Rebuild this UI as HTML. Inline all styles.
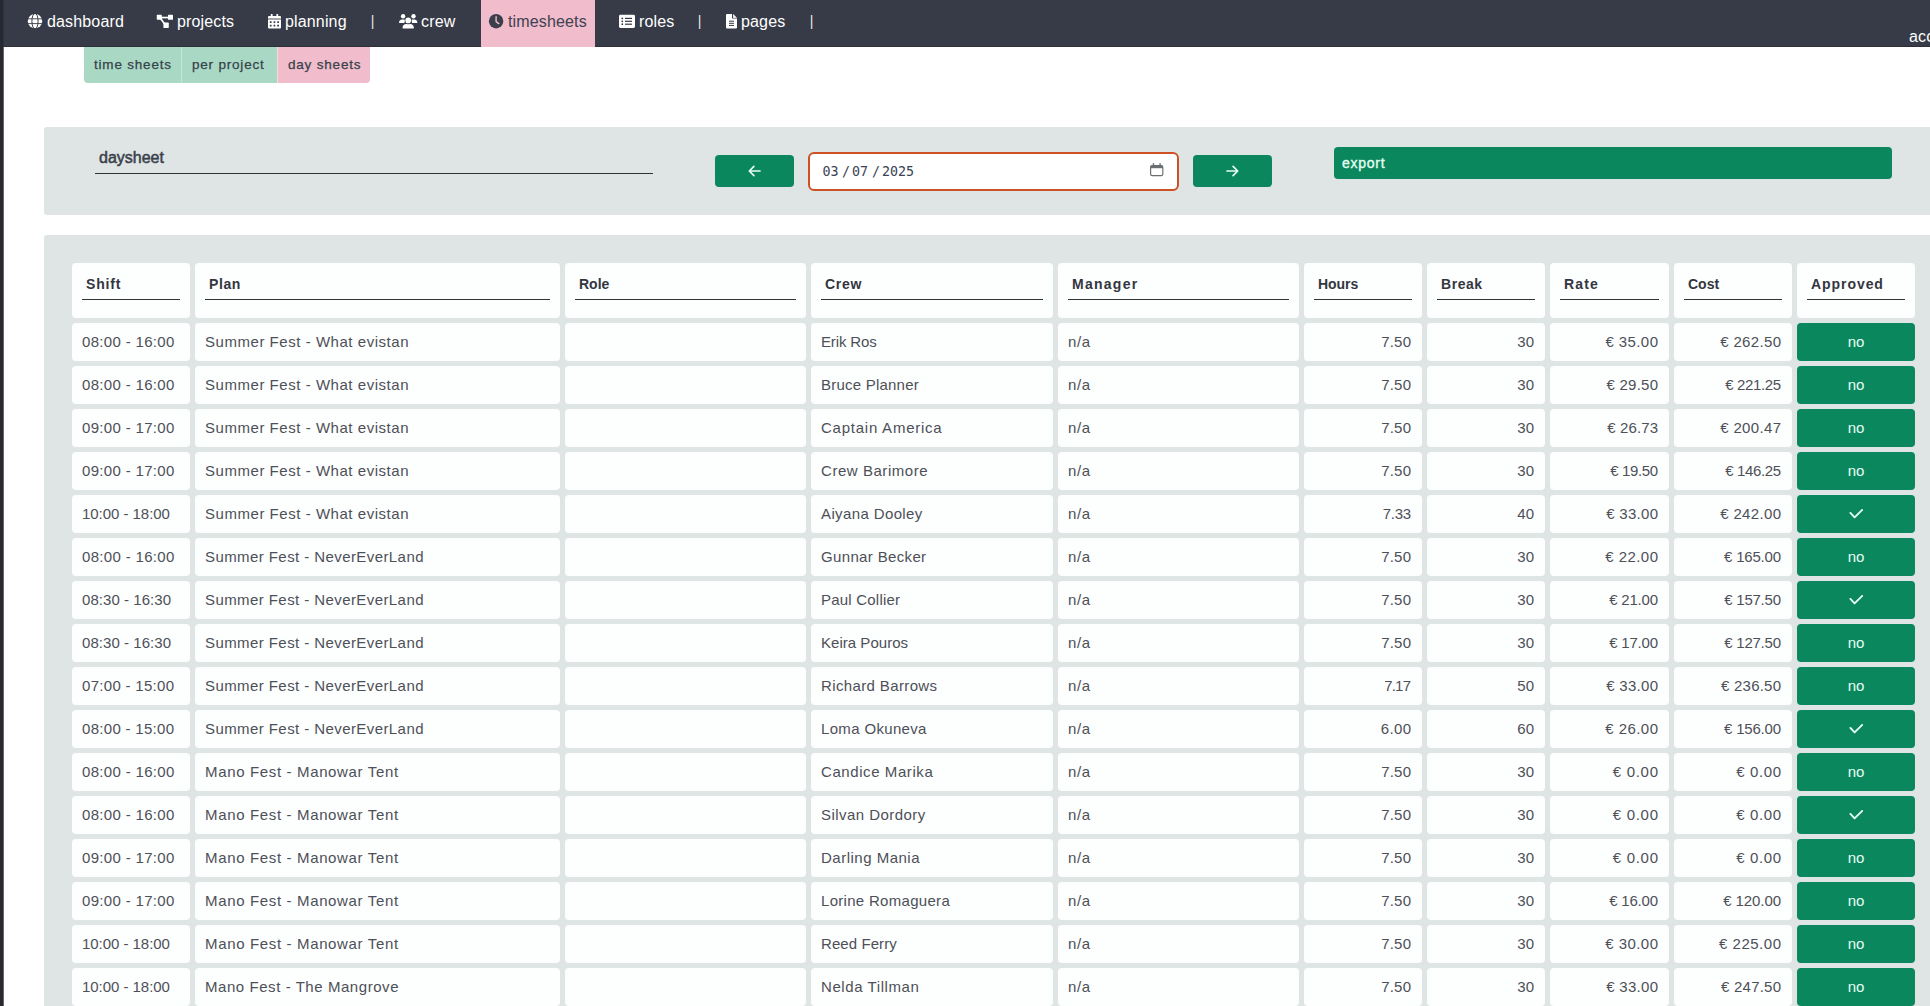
<!DOCTYPE html>
<html lang="en">
<head>
<meta charset="utf-8">
<title>day sheets</title>
<style>
*{box-sizing:border-box;margin:0;padding:0}
html,body{width:1930px;height:1006px;overflow:hidden;background:#fff}
body{font-family:"Liberation Sans",sans-serif;color:#474a50;position:relative}
.strip{position:absolute;left:0;top:0;width:4px;height:1006px;background:#2a292d;border-right:1px solid #69686b;z-index:5}
.strip i{position:absolute;left:0;top:0;width:4px;height:47px;background:#262932;border-right:1px solid #30333d}
.nav{position:absolute;left:0;top:0;width:1930px;height:47px;background:#363b47;border-bottom:1px solid #2d3038}
.nav .it{position:absolute;top:0;height:46px;color:#fff;font-size:16px;line-height:16px;white-space:nowrap;letter-spacing:.15px}
.nav .it span{position:absolute;top:14px;left:0}
.nav .it svg{position:absolute}
.nav .sep{position:absolute;top:12px;color:#e4e5e7;font-size:14px;line-height:18px;width:4px;text-align:center}
.nav .act{position:absolute;left:481px;top:0;width:114px;height:47px;background:#f1bccb}
.tabs{position:absolute;left:84px;top:47px;height:36px;display:flex;font-size:13.5px;letter-spacing:.8px;color:#37424a;-webkit-text-stroke:.25px #37424a}
.tabs div{height:36px;background:#a9d9c5;position:relative}
.tabs div span{position:absolute;top:10px;white-space:nowrap;line-height:16px}
.panel{position:absolute;left:44px;background:#dfe5e5;border-radius:3px 0 0 3px;width:1900px}
.p1{top:127px;height:88px}
.p2{top:235px;height:800px}
.ttl{position:absolute;left:51px;top:20px;width:558px;height:27px;border-bottom:1px solid #2f3338;font-size:16px;-webkit-text-stroke:.5px #3a3f4a;color:#3a3f4a}
.ttl span{position:absolute;left:4px;top:3px;line-height:16px}
.btn{position:absolute;background:#0b875d;border-radius:4px;color:#fff}
.date{position:absolute;left:764px;top:25px;width:371px;height:39px;background:#fff;border:2px solid #cc5226;border-radius:6px;font-family:"DejaVu Sans Mono","Liberation Mono",monospace;font-size:13.33px;color:#3a4254}
.date span{position:absolute;top:10px;line-height:16px;white-space:pre}
table{position:absolute;left:23px;top:23px;border-collapse:separate;border-spacing:5px;table-layout:fixed;width:1853px;font-size:15px}
th,td{background:#fdfefe;border-radius:4px;overflow:hidden;white-space:nowrap}
th{height:55px;text-align:left;vertical-align:top;padding:10px;font-size:14px;color:#33363f}
th div{height:27px;border-bottom:1.5px solid #2f3338;padding:2px 0 0 4px;line-height:18px}
td{height:38px;padding:0 10px;color:#4d5058;line-height:38px}
td.r{text-align:right;padding-right:11px}
td.r span{display:inline-block}
td.ap{background:#0b875d;color:#e6fff4;text-align:center;padding:0}
.chk{width:14px;height:11px;vertical-align:middle;position:relative;top:-1.5px;left:-.5px}
</style>
</head>
<body>
<div class="nav">
  <div class="act"></div>

  <svg style="position:absolute;left:27px;top:13px" width="16" height="16" viewBox="-8 -8 16 16"><circle cx="0" cy="0.2" r="7.2" fill="#fff"/><g stroke="#363b47" fill="none"><path d="M-7.5 -2.2H7.5M-7.5 2.6H7.5" stroke-width="0.9"/><ellipse cx="0" cy="0.2" rx="3.1" ry="7.8" stroke-width="1"/></g></svg>
  <svg style="position:absolute;left:156px;top:14px" width="18" height="15" viewBox="156 14 18 15"><g fill="#fff"><rect x="156.8" y="14.8" width="5" height="5" rx=".6"/><rect x="168" y="14.8" width="5" height="5" rx=".6"/><rect x="163.4" y="22.4" width="5.4" height="5.5" rx=".6"/><rect x="161" y="16.7" width="8" height="1.7"/></g><path d="M160.6 18.6 L164.6 24" stroke="#fff" stroke-width="1.7"/></svg>
  <svg style="position:absolute;left:267px;top:13px" width="15" height="16" viewBox="267 13 15 16"><g fill="#fff"><path d="M269 15.9 H280 A1 1 0 0 1 281 16.9 V18.4 H268 V16.9 A1 1 0 0 1 269 15.9 Z"/><rect x="268" y="18.4" width="13" height="1.3" fill="#aeb0b6"/><path d="M268 19.7 H281 V27.6 A1 1 0 0 1 280 28.6 H269 A1 1 0 0 1 268 27.6 Z"/><rect x="270.8" y="14" width="1.8" height="3" rx=".5"/><rect x="276.4" y="14" width="1.8" height="3" rx=".5"/></g><g fill="#363b47"><rect x="269.8" y="21.2" width="1.8" height="1.7" rx=".3"/><rect x="273.5" y="21.2" width="1.8" height="1.7" rx=".3"/><rect x="277.2" y="21.2" width="1.8" height="1.7" rx=".3"/><rect x="269.8" y="24.7" width="1.8" height="1.7" rx=".3"/><rect x="273.5" y="24.7" width="1.8" height="1.7" rx=".3"/><rect x="277.2" y="24.7" width="1.8" height="1.7" rx=".3"/></g></svg>
  <svg style="position:absolute;left:398px;top:13px" width="20" height="16" viewBox="398 13 20 16"><g fill="#fff"><circle cx="403.1" cy="16.2" r="2.2"/><circle cx="413.5" cy="16.2" r="2.2"/><path d="M399 23 C399 20.6 400.6 19.6 402 19.6 H404 C404.8 19.6 405.4 19.9 405.9 20.3 C404.9 21 404.5 22 404.4 23 Z"/><path d="M417.4 23 C417.4 20.6 415.8 19.6 414.4 19.6 H412.4 C411.6 19.6 411 19.9 410.5 20.3 C411.5 21 411.9 22 412 23 Z"/><circle cx="408.2" cy="20.4" r="3.5" fill="#363b47"/><circle cx="408.2" cy="20.4" r="2.85"/><path d="M402.6 28.6 V27.4 C402.6 25.2 404.4 23.9 406 23.9 H406.4 C407.6 24.5 408.8 24.5 410 23.9 H410.4 C412 23.9 413.8 25.2 413.8 27.4 V28.6 Z"/></g></svg>
  <svg style="position:absolute;left:488px;top:13px" width="16" height="16" viewBox="488 13 16 16"><circle cx="496.1" cy="21.2" r="7.2" fill="#3b3f4c"/><path d="M496.1 16.8 V21.6 L498.8 23.6" fill="none" stroke="#f1bccb" stroke-width="1.4" stroke-linecap="round" stroke-linejoin="round"/></svg>
  <svg style="position:absolute;left:618px;top:14px" width="18" height="15" viewBox="618 14 18 15"><rect x="619" y="14.8" width="16" height="13.1" rx="1.4" fill="#fff"/><g fill="#363b47"><circle cx="622.3" cy="18.4" r=".9"/><circle cx="622.3" cy="21.3" r=".9"/><circle cx="622.3" cy="24.2" r=".9"/><rect x="625" y="17.8" width="7" height="1.2"/><rect x="625" y="20.7" width="7" height="1.2"/><rect x="625" y="23.6" width="7" height="1.2"/></g></svg>
  <svg style="position:absolute;left:725px;top:13px" width="13" height="16" viewBox="725 13 13 16"><path d="M727 14 H732 V18.6 H737 V27.4 A1 1 0 0 1 736 28.4 H727 A1 1 0 0 1 726 27.4 V15 A1 1 0 0 1 727 14 Z" fill="#fff"/><path d="M733 14 L737 18 V17.8 H733 Z" fill="#fff"/><path d="M733 14.2 V17.8 H736.8 Z" fill="#e8e9ec"/><g fill="#363b47"><rect x="729" y="20.7" width="5" height="1"/><rect x="729" y="22.8" width="5" height="1"/><rect x="729" y="24.9" width="5" height="1"/></g></svg>
  <div class="it" style="left:47px"><span>dashboard</span></div>
  <div class="it" style="left:177px"><span>projects</span></div>
  <div class="it" style="left:285px"><span>planning</span></div>
  <div class="sep" style="left:370.5px">|</div>
  <div class="it" style="left:421px"><span>crew</span></div>
  <div class="it" style="left:508px;color:#3d4150"><span>timesheets</span></div>
  <div class="it" style="left:639px"><span>roles</span></div>
  <div class="sep" style="left:697.5px">|</div>
  <div class="it" style="left:741px"><span>pages</span></div>
  <div class="sep" style="left:809.5px">|</div>
  <div class="it" style="left:1909px"><span style="top:29px">account</span></div>
</div>
<div class="tabs">
  <div style="width:97px;border-radius:0 0 0 4px"><span style="left:10px">time sheets</span></div>
  <div style="width:96px;border-left:1px solid #c4e6d8"><span style="left:10px">per project</span></div>
  <div style="width:93px;background:#f1bccb;border-left:1px solid #f4d9e0;border-radius:0 0 4px 0"><span style="left:10px">day sheets</span></div>
</div>
<div class="panel p1">
  <div class="ttl"><span>daysheet</span></div>
  <div class="btn" style="left:671px;top:28px;width:79px;height:32px"><svg style="position:absolute;left:32px;top:9px" width="15" height="14" viewBox="0 0 15 14"><path d="M13 7 H2.6 M6.9 2.4 L2.3 7 L6.9 11.6" fill="none" stroke="#e6fff4" stroke-width="1.7" stroke-linecap="round" stroke-linejoin="round"/></svg></div>
  <div class="date"><span style="left:12.5px">03</span><span style="left:32px">/</span><span style="left:42px">07</span><span style="left:62px">/</span><span style="left:72px">2025</span>
    <svg style="position:absolute;left:340px;top:9px" width="14" height="14" viewBox="0 0 14 14"><rect x="0.6" y="2.6" width="12.2" height="10" rx="1.6" fill="none" stroke="#6c6f71" stroke-width="1.2"/><rect x="0.6" y="2.6" width="12.2" height="2.6" fill="#6c6f71"/><rect x="2.8" y="0.2" width="1.4" height="3" fill="#6c6f71"/><rect x="9.4" y="0.2" width="1.4" height="3" fill="#6c6f71"/></svg></div>
  <div class="btn" style="left:1149px;top:28px;width:79px;height:32px"><svg style="position:absolute;left:32px;top:9px" width="15" height="14" viewBox="0 0 15 14"><path d="M2 7 H12.4 M8.1 2.4 L12.7 7 L8.1 11.6" fill="none" stroke="#e6fff4" stroke-width="1.7" stroke-linecap="round" stroke-linejoin="round"/></svg></div>
  <div class="btn" style="left:1290px;top:20px;width:558px;height:32px;font-size:14px;letter-spacing:.75px;color:#e3fff2;-webkit-text-stroke:.35px #e3fff2"><span style="position:absolute;left:8px;top:8px;line-height:16px">export</span></div>
</div>
<div class="panel p2">
<table>
<colgroup><col style="width:118px"><col style="width:365px"><col style="width:241px"><col style="width:242px"><col style="width:241px"><col style="width:118px"><col style="width:118px"><col style="width:119px"><col style="width:118px"><col style="width:118px"></colgroup>
<thead><tr><th><div style="letter-spacing:.85px">Shift</div></th><th><div style="letter-spacing:.6px">Plan</div></th><th><div style="letter-spacing:-0px">Role</div></th><th><div style="letter-spacing:.73px">Crew</div></th><th><div style="letter-spacing:1.27px">Manager</div></th><th><div style="letter-spacing:-.05px">Hours</div></th><th><div style="letter-spacing:.55px">Break</div></th><th><div style="letter-spacing:1.13px">Rate</div></th><th><div style="letter-spacing:-0px">Cost</div></th><th><div style="letter-spacing:.94px">Approved</div></th></tr></thead>
<tbody>
<tr><td style="letter-spacing:.33px">08:00 - 16:00</td><td style="letter-spacing:.54px">Summer Fest - What evistan</td><td></td><td style="letter-spacing:-.13px">Erik Ros</td><td style="letter-spacing:.6px">n/a</td><td class="r"><span style="letter-spacing:.18px;margin-right:-.18px">7.50</span></td><td class="r"><span style="letter-spacing:.05px;margin-right:-.05px">30</span></td><td class="r"><span style="letter-spacing:.42px;margin-right:-.42px">€ 35.00</span></td><td class="r"><span style="letter-spacing:.34px;margin-right:-.34px">€ 262.50</span></td><td class="ap">no</td></tr>
<tr><td style="letter-spacing:.33px">08:00 - 16:00</td><td style="letter-spacing:.54px">Summer Fest - What evistan</td><td></td><td style="letter-spacing:.22px">Bruce Planner</td><td style="letter-spacing:.6px">n/a</td><td class="r"><span style="letter-spacing:.18px;margin-right:-.18px">7.50</span></td><td class="r"><span style="letter-spacing:.05px;margin-right:-.05px">30</span></td><td class="r"><span style="letter-spacing:.25px;margin-right:-.25px">€ 29.50</span></td><td class="r"><span style="letter-spacing:-.38px;margin-right:.38px">€ 221.25</span></td><td class="ap">no</td></tr>
<tr><td style="letter-spacing:.33px">09:00 - 17:00</td><td style="letter-spacing:.54px">Summer Fest - What evistan</td><td></td><td style="letter-spacing:.76px">Captain America</td><td style="letter-spacing:.6px">n/a</td><td class="r"><span style="letter-spacing:.18px;margin-right:-.18px">7.50</span></td><td class="r"><span style="letter-spacing:.05px;margin-right:-.05px">30</span></td><td class="r"><span style="letter-spacing:.12px;margin-right:-.12px">€ 26.73</span></td><td class="r"><span style="letter-spacing:.34px;margin-right:-.34px">€ 200.47</span></td><td class="ap">no</td></tr>
<tr><td style="letter-spacing:.33px">09:00 - 17:00</td><td style="letter-spacing:.54px">Summer Fest - What evistan</td><td></td><td style="letter-spacing:.55px">Crew Barimore</td><td style="letter-spacing:.6px">n/a</td><td class="r"><span style="letter-spacing:.18px;margin-right:-.18px">7.50</span></td><td class="r"><span style="letter-spacing:.05px;margin-right:-.05px">30</span></td><td class="r"><span style="letter-spacing:-.38px;margin-right:.38px">€ 19.50</span></td><td class="r"><span style="letter-spacing:-.38px;margin-right:.38px">€ 146.25</span></td><td class="ap">no</td></tr>
<tr><td style="letter-spacing:-.04px">10:00 - 18:00</td><td style="letter-spacing:.54px">Summer Fest - What evistan</td><td></td><td style="letter-spacing:.38px">Aiyana Dooley</td><td style="letter-spacing:.6px">n/a</td><td class="r"><span style="letter-spacing:-.35px;margin-right:.35px">7.33</span></td><td class="r"><span style="letter-spacing:.05px;margin-right:-.05px">40</span></td><td class="r"><span style="letter-spacing:.28px;margin-right:-.28px">€ 33.00</span></td><td class="r"><span style="letter-spacing:.34px;margin-right:-.34px">€ 242.00</span></td><td class="ap"><svg class="chk" viewBox="0 0 14 11"><path d="M1.4 4.9 L5.6 9.4 L13.2 1.9" fill="none" stroke="#e6fff4" stroke-width="1.9" stroke-linecap="round" stroke-linejoin="round"/></svg></td></tr>
<tr><td style="letter-spacing:.33px">08:00 - 16:00</td><td style="letter-spacing:.42px">Summer Fest - NeverEverLand</td><td></td><td style="letter-spacing:.35px">Gunnar Becker</td><td style="letter-spacing:.6px">n/a</td><td class="r"><span style="letter-spacing:.18px;margin-right:-.18px">7.50</span></td><td class="r"><span style="letter-spacing:.05px;margin-right:-.05px">30</span></td><td class="r"><span style="letter-spacing:.45px;margin-right:-.45px">€ 22.00</span></td><td class="r"><span style="letter-spacing:-.21px;margin-right:.21px">€ 165.00</span></td><td class="ap">no</td></tr>
<tr><td style="letter-spacing:.05px">08:30 - 16:30</td><td style="letter-spacing:.42px">Summer Fest - NeverEverLand</td><td></td><td style="letter-spacing:.21px">Paul Collier</td><td style="letter-spacing:.6px">n/a</td><td class="r"><span style="letter-spacing:.18px;margin-right:-.18px">7.50</span></td><td class="r"><span style="letter-spacing:.05px;margin-right:-.05px">30</span></td><td class="r"><span style="letter-spacing:-.22px;margin-right:.22px">€ 21.00</span></td><td class="r"><span style="letter-spacing:-.23px;margin-right:.23px">€ 157.50</span></td><td class="ap"><svg class="chk" viewBox="0 0 14 11"><path d="M1.4 4.9 L5.6 9.4 L13.2 1.9" fill="none" stroke="#e6fff4" stroke-width="1.9" stroke-linecap="round" stroke-linejoin="round"/></svg></td></tr>
<tr><td style="letter-spacing:.05px">08:30 - 16:30</td><td style="letter-spacing:.42px">Summer Fest - NeverEverLand</td><td></td><td style="letter-spacing:.03px">Keira Pouros</td><td style="letter-spacing:.6px">n/a</td><td class="r"><span style="letter-spacing:.18px;margin-right:-.18px">7.50</span></td><td class="r"><span style="letter-spacing:.05px;margin-right:-.05px">30</span></td><td class="r"><span style="letter-spacing:-.22px;margin-right:.22px">€ 17.00</span></td><td class="r"><span style="letter-spacing:-.23px;margin-right:.23px">€ 127.50</span></td><td class="ap">no</td></tr>
<tr><td style="letter-spacing:.3px">07:00 - 15:00</td><td style="letter-spacing:.42px">Summer Fest - NeverEverLand</td><td></td><td style="letter-spacing:.37px">Richard Barrows</td><td style="letter-spacing:.6px">n/a</td><td class="r"><span style="letter-spacing:-.8px;margin-right:.8px">7.17</span></td><td class="r"><span style="letter-spacing:.05px;margin-right:-.05px">50</span></td><td class="r"><span style="letter-spacing:.28px;margin-right:-.28px">€ 33.00</span></td><td class="r"><span style="letter-spacing:.22px;margin-right:-.22px">€ 236.50</span></td><td class="ap">no</td></tr>
<tr><td style="letter-spacing:.3px">08:00 - 15:00</td><td style="letter-spacing:.42px">Summer Fest - NeverEverLand</td><td></td><td style="letter-spacing:.34px">Loma Okuneva</td><td style="letter-spacing:.6px">n/a</td><td class="r"><span style="letter-spacing:.38px;margin-right:-.38px">6.00</span></td><td class="r"><span style="letter-spacing:.05px;margin-right:-.05px">60</span></td><td class="r"><span style="letter-spacing:.45px;margin-right:-.45px">€ 26.00</span></td><td class="r"><span style="letter-spacing:-.21px;margin-right:.21px">€ 156.00</span></td><td class="ap"><svg class="chk" viewBox="0 0 14 11"><path d="M1.4 4.9 L5.6 9.4 L13.2 1.9" fill="none" stroke="#e6fff4" stroke-width="1.9" stroke-linecap="round" stroke-linejoin="round"/></svg></td></tr>
<tr><td style="letter-spacing:.33px">08:00 - 16:00</td><td style="letter-spacing:.65px">Mano Fest - Manowar Tent</td><td></td><td style="letter-spacing:.58px">Candice Marika</td><td style="letter-spacing:.6px">n/a</td><td class="r"><span style="letter-spacing:.18px;margin-right:-.18px">7.50</span></td><td class="r"><span style="letter-spacing:.05px;margin-right:-.05px">30</span></td><td class="r"><span style="letter-spacing:.69px;margin-right:-.69px">€ 0.00</span></td><td class="r"><span style="letter-spacing:.61px;margin-right:-.61px">€ 0.00</span></td><td class="ap">no</td></tr>
<tr><td style="letter-spacing:.33px">08:00 - 16:00</td><td style="letter-spacing:.65px">Mano Fest - Manowar Tent</td><td></td><td style="letter-spacing:.45px">Silvan Dordory</td><td style="letter-spacing:.6px">n/a</td><td class="r"><span style="letter-spacing:.18px;margin-right:-.18px">7.50</span></td><td class="r"><span style="letter-spacing:.05px;margin-right:-.05px">30</span></td><td class="r"><span style="letter-spacing:.69px;margin-right:-.69px">€ 0.00</span></td><td class="r"><span style="letter-spacing:.61px;margin-right:-.61px">€ 0.00</span></td><td class="ap"><svg class="chk" viewBox="0 0 14 11"><path d="M1.4 4.9 L5.6 9.4 L13.2 1.9" fill="none" stroke="#e6fff4" stroke-width="1.9" stroke-linecap="round" stroke-linejoin="round"/></svg></td></tr>
<tr><td style="letter-spacing:.33px">09:00 - 17:00</td><td style="letter-spacing:.65px">Mano Fest - Manowar Tent</td><td></td><td style="letter-spacing:.5px">Darling Mania</td><td style="letter-spacing:.6px">n/a</td><td class="r"><span style="letter-spacing:.18px;margin-right:-.18px">7.50</span></td><td class="r"><span style="letter-spacing:.05px;margin-right:-.05px">30</span></td><td class="r"><span style="letter-spacing:.69px;margin-right:-.69px">€ 0.00</span></td><td class="r"><span style="letter-spacing:.61px;margin-right:-.61px">€ 0.00</span></td><td class="ap">no</td></tr>
<tr><td style="letter-spacing:.33px">09:00 - 17:00</td><td style="letter-spacing:.65px">Mano Fest - Manowar Tent</td><td></td><td style="letter-spacing:.3px">Lorine Romaguera</td><td style="letter-spacing:.6px">n/a</td><td class="r"><span style="letter-spacing:.18px;margin-right:-.18px">7.50</span></td><td class="r"><span style="letter-spacing:.05px;margin-right:-.05px">30</span></td><td class="r"><span style="letter-spacing:-.22px;margin-right:.22px">€ 16.00</span></td><td class="r"><span style="letter-spacing:-.09px;margin-right:.09px">€ 120.00</span></td><td class="ap">no</td></tr>
<tr><td style="letter-spacing:-.04px">10:00 - 18:00</td><td style="letter-spacing:.65px">Mano Fest - Manowar Tent</td><td></td><td style="letter-spacing:.08px">Reed Ferry</td><td style="letter-spacing:.6px">n/a</td><td class="r"><span style="letter-spacing:.18px;margin-right:-.18px">7.50</span></td><td class="r"><span style="letter-spacing:.05px;margin-right:-.05px">30</span></td><td class="r"><span style="letter-spacing:.45px;margin-right:-.45px">€ 30.00</span></td><td class="r"><span style="letter-spacing:.51px;margin-right:-.51px">€ 225.00</span></td><td class="ap">no</td></tr>
<tr><td style="letter-spacing:-.04px">10:00 - 18:00</td><td style="letter-spacing:.56px">Mano Fest - The Mangrove</td><td></td><td style="letter-spacing:.58px">Nelda Tillman</td><td style="letter-spacing:.6px">n/a</td><td class="r"><span style="letter-spacing:.18px;margin-right:-.18px">7.50</span></td><td class="r"><span style="letter-spacing:.05px;margin-right:-.05px">30</span></td><td class="r"><span style="letter-spacing:.28px;margin-right:-.28px">€ 33.00</span></td><td class="r"><span style="letter-spacing:.22px;margin-right:-.22px">€ 247.50</span></td><td class="ap">no</td></tr>
</tbody>
</table>
</div>
<div class="strip"><i></i></div>
</body>
</html>
